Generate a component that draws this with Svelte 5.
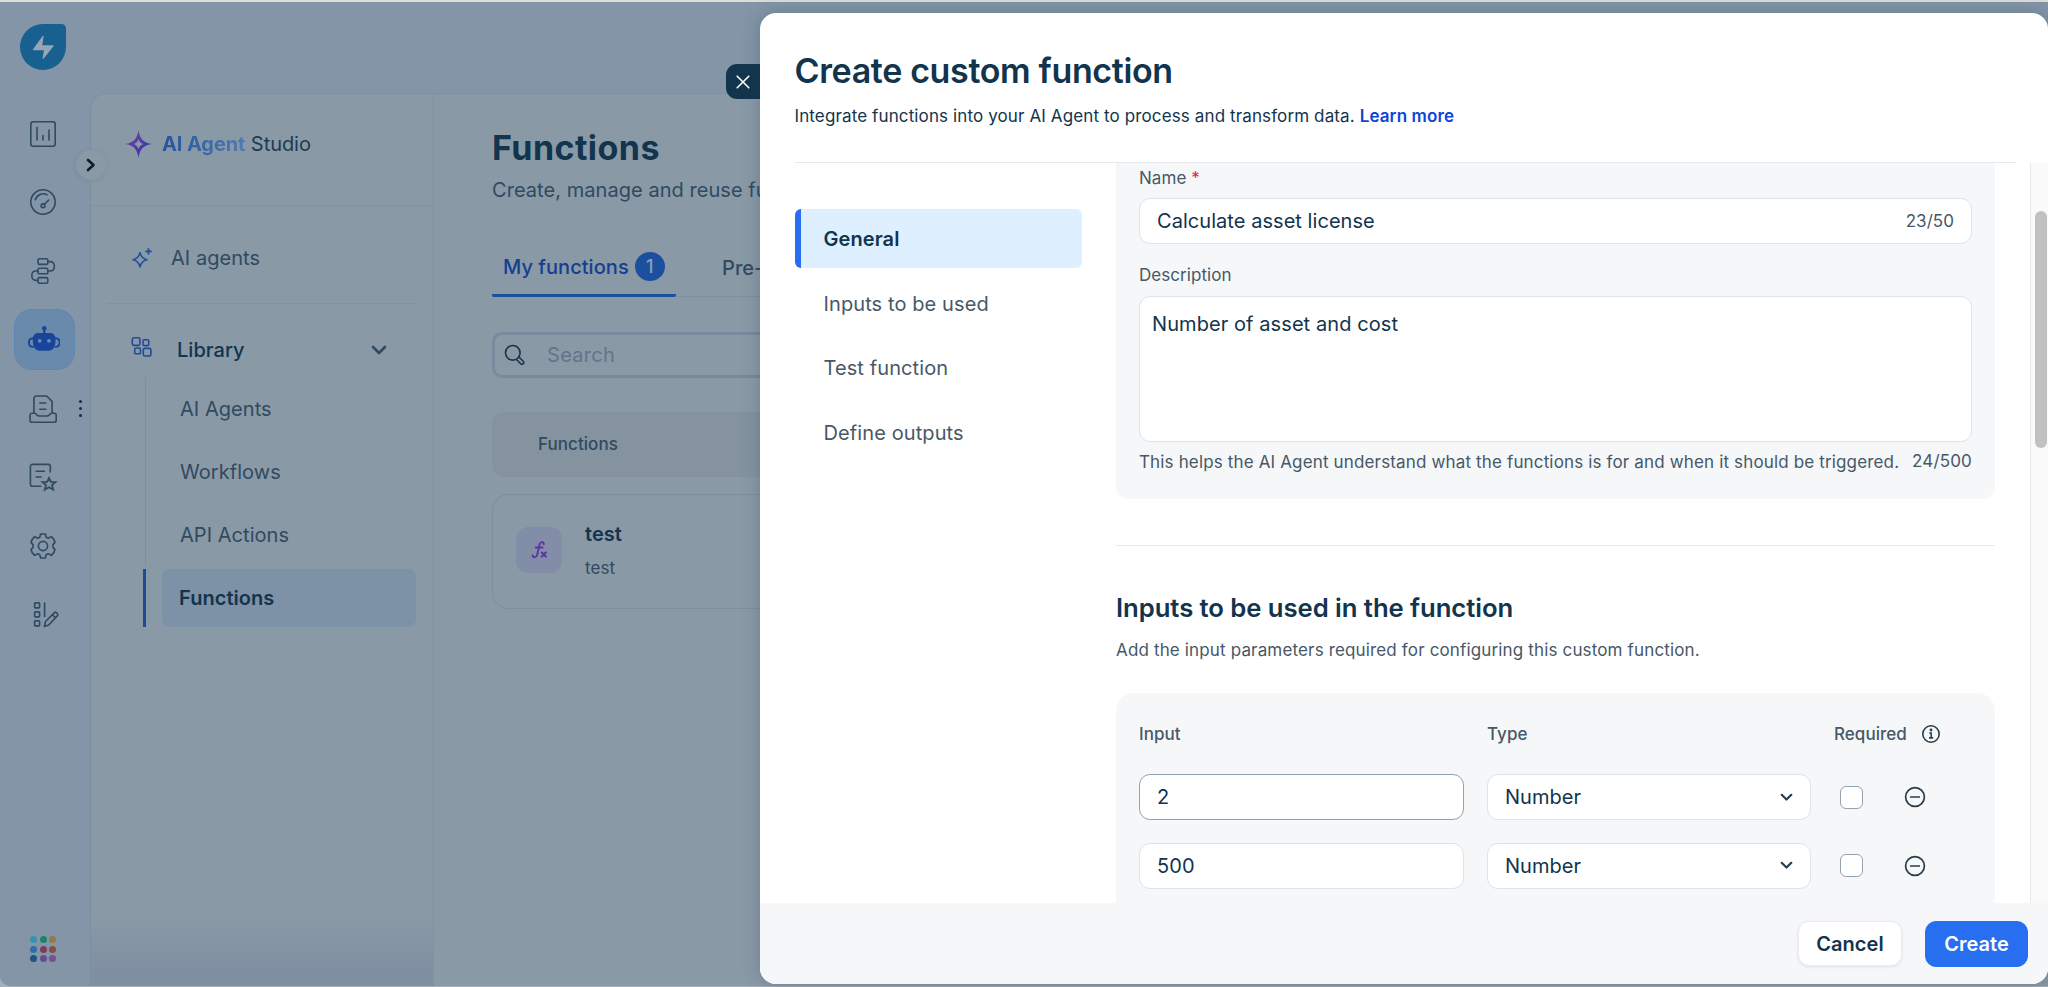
<script lang="ts">
  type InputRow = { id: number; value: string; type: string; required: boolean };

  const libraryItems = ["AI Agents", "Workflows", "API Actions", "Functions"];
  const steps = ["General", "Inputs to be used", "Test function", "Define outputs"];
  const railIcons = ["chart", "gauge", "flow", "bot", "inbox", "review", "gear", "design"];
  const switcherColors = [
    "#3695ab", "#1f8168", "#8f7c46",
    "#2d6fa6", "#7d3d56", "#8a4d42",
    "#1f5384", "#644e90", "#775092",
  ];

  let activeStep = $state("General");
  let name = $state("Calculate asset license");
  let description = $state("Number of asset and cost");
  let rows = $state<InputRow[]>([
    { id: 1, value: "2", type: "Number", required: false },
    { id: 2, value: "500", type: "Number", required: false },
  ]);

  function removeRow(id: number) {
    rows = rows.filter((r) => r.id !== id);
  }
</script>

{#snippet railIcon(kind: string)}
  <svg width="34" height="34" viewBox="0 0 34 34" fill="none" stroke="currentColor" stroke-width="1.6" stroke-linecap="round" stroke-linejoin="round">
    {#if kind === "chart"}
      <rect x="4.8" y="4.8" width="24.4" height="24.4" rx="2.4" />
      <path d="M11 10.5v12.5M17 18.5v4.5M23 13v10" />
    {:else if kind === "gauge"}
      <circle cx="17" cy="17" r="12.2" />
      <path d="M9.3 14.8A8.2 8.2 0 0 1 21 9.8M22.8 15l-4.4 4.3" />
      <circle cx="17" cy="20.8" r="1.9" />
    {:else if kind === "flow"}
      <rect x="12" y="4.8" width="9.8" height="5.6" rx="1.4" />
      <rect x="12" y="14.2" width="9.8" height="5.6" rx="1.4" />
      <rect x="12" y="23.6" width="9.8" height="5.6" rx="1.4" />
      <path d="M21.8 7.6h2.7a3.8 3.8 0 0 1 3.8 3.8v1.8a3.8 3.8 0 0 1-3.8 3.8h-2.7M12 17H9.7a3.8 3.8 0 0 0-3.8 3.8v1.8a3.8 3.8 0 0 0 3.8 3.8H12" />
    {:else if kind === "bot"}
      <g stroke="none" fill="currentColor">
        <path fill-rule="evenodd" d="M12 9.9h12.500c2.600 0 4.700 2 4.900 5.200.3 3.500.1 7.500-1.700 10-1.400 1.900-3 2.700-5 2.700h-9.100c-2 0-3.600-.8-5-2.700-1.800-2.500-2-6.500-1.700-10 .2-3.200 2.500-5.200 5.100-5.200zM15.600 17.800a1.900 1.900 0 1 0-3.800 0 1.900 1.900 0 1 0 3.800 0zM24.900 17.800a1.900 1.900 0 1 0-3.800 0 1.900 1.900 0 1 0 3.800 0z" />
        <circle cx="18.3" cy="5.3" r="2.3" />
        <path d="M17.200 6h2.200v4.500h-2.200z" />
      </g>
      <path d="M7 15.200c-2.900-.2-4.100 2-4.100 4.300s1.300 4.400 4.200 4.400M29.500 15.200c2.900-.2 4.100 2 4.100 4.300s-1.300 4.400-4.200 4.400" stroke-width="1.9" />
    {:else if kind === "inbox"}
      <path d="M7.900 20.500V6.800a2.800 2.800 0 0 1 2.800-2.800h9.800l5.600 5.400v11.100M13.800 11h6M13.800 17.200h6" />
      <path d="M6 21.200h2.500c1 0 1.500.7 2.200 1.500.8.900 1.600 1.300 2.700 1.300h7.400c1.100 0 1.900-.4 2.700-1.300.7-.8 1.200-1.500 2.200-1.500h2.500a2 2 0 0 1 2 2v5a2 2 0 0 1-2 2H6a2 2 0 0 1-2-2v-5a2 2 0 0 1 2-2z" />
    {:else if kind === "review"}
      <path d="M24.300 12V6.400a2 2 0 0 0-2-2H6.400a2 2 0 0 0-2 2v17.800a2 2 0 0 0 2 2h8.400M10.200 11.200h8.200M10.200 17h5" />
      <path d="M23 18l1.900 3.800 4.600.3-3.500 3 1.200 4.600-4.200-2.500-4.200 2.500 1.200-4.600-3.500-3 4.600-.3z" stroke-linejoin="miter" stroke-width="1.8" />
    {:else if kind === "gear"}
      <path d="M14.600 5h4.800l.8 3.300 2 .9 3.100-1.600 2.500 2.800 1.200 3-2 2.200v2.800l2 2.200-1.200 3-2.500 2.800-3.100-1.600-2 .9-.8 3.300h-4.800l-.8-3.300-2-.9-3.100 1.600-2.500-2.800-1.200-3 2-2.200v-2.800l-2-2.200 1.200-3 2.500-2.800 3.100 1.600 2-.9z" />
      <circle cx="17" cy="17" r="4.6" />
    {:else}
      <rect x="8.6" y="4.9" width="5" height="5" rx=".8" />
      <rect x="8.6" y="13.9" width="5" height="5" rx=".8" />
      <rect x="8.6" y="22.9" width="5" height="5" rx=".8" />
      <path d="M18.600 5v13.500M18.300 28.500l1.200-5L28.500 14.600a1.300 1.300 0 0 1 1.800 0l1.200 1.200a1.300 1.300 0 0 1 0 1.800L22.700 27zM26.500 16.800l3 3" />
    {/if}
  </svg>
{/snippet}

<div class="page">
  <div class="app">
    <nav class="rail">
      <svg class="logo" width="46" height="46" viewBox="0 0 46 46">
        <path d="M23 0h18.500A4.500 4.500 0 0 1 46 4.500V23A23 23 0 1 1 23 0z" fill="#17608f" />
        <path d="M22.800 11.800 13 25.300q-.5.900.6.900h10.300l-1.300 8.200q.4 1 1.100.2l9.800-12.400q.5-1-.6-1H22.300l1.300-8.900q-.2-1-.8-.5z" fill="#98a6b3" />
      </svg>
      <div class="rail-items">
        {#each railIcons as kind (kind)}
          <button class="rail-btn" class:active={kind === "bot"} aria-label={kind}>
            {@render railIcon(kind)}
            {#if kind === "inbox"}
              <span class="more"><i></i><i></i><i></i></span>
            {/if}
          </button>
        {/each}
      </div>
      <div class="switcher">
        {#each switcherColors as color}
          <i style="background: {color}"></i>
        {/each}
      </div>
    </nav>

    <div class="workspace">
      <aside class="sidebar">
        <button class="collapse" aria-label="Expand">
          <svg width="10" height="14" viewBox="0 0 10 14" fill="none" stroke="#0a1d2b" stroke-width="2.6" stroke-linecap="round" stroke-linejoin="round"><path d="M2 2l5.500 5L2 12" /></svg>
        </button>
        <div class="brand">
          <svg width="27" height="28" viewBox="0 0 27 28">
            <defs>
              <linearGradient id="spark" x1="0" y1="0" x2="1" y2="1">
                <stop offset="0.2" stop-color="#6b3f9e" />
                <stop offset="0.8" stop-color="#3a36a8" />
              </linearGradient>
            </defs>
            <path fill="url(#spark)" fill-rule="evenodd" d="M13.500 0c1.200 8.500 4.500 12.800 13.500 14-9 1.200-12.300 5.500-13.500 14C12.300 19.500 9 15.200 0 14 9 12.800 12.300 8.500 13.500 0zm0 9c-1 2.800-2.300 4-5 5 2.700 1 4 2.200 5 5 1-2.800 2.300-4 5-5-2.700-1-4-2.200-5-5z" />
          </svg>
          <span class="brand-text"><b>AI Agent</b> Studio</span>
        </div>
        <div class="side-link agents">
          <svg width="22" height="22" viewBox="0 0 22 22" fill="none" stroke="#224f9d" stroke-width="1.6" stroke-linejoin="round">
            <path d="M9 5.500c.9 4.300 2.700 6.200 7 7.200-4.300 1-6.100 2.900-7 7.200-.9-4.300-2.700-6.200-7-7.200 4.300-1 6.100-2.900 7-7.200z" />
            <path d="M17.500 1.200v6.400M14.300 4.400h6.400" stroke-width="1.8" />
          </svg>
          <span>AI agents</span>
        </div>
        <div class="side-link library">
          <svg width="22" height="22" viewBox="0 0 22 22" fill="none" stroke="#224b95" stroke-width="1.6">
            <rect x="1.3" y="1.8" width="7.6" height="7.6" rx="1.6" />
            <rect x="12" y="3.8" width="5.8" height="5.8" rx="1.4" />
            <rect x="3.7" y="12" width="5.8" height="5.8" rx="1.4" />
            <rect x="12.3" y="12.4" width="7.6" height="7.6" rx="1.6" />
          </svg>
          <span>Library</span>
          <svg class="chev" width="16" height="12" viewBox="0 0 16 12" fill="none" stroke="#304b61" stroke-width="2.7" stroke-linecap="round" stroke-linejoin="round"><path d="M2 3l6 6 6-6" /></svg>
        </div>
        <ul class="tree">
          {#each libraryItems as item (item)}
            <li class:current={item === "Functions"}><span>{item}</span></li>
          {/each}
        </ul>
      </aside>

      <main class="main">
        <h1>Functions</h1>
        <p class="lead">Create, manage and reuse functions across your agents.</p>
        <div class="tabs">
          <div class="tab selected">My functions <span class="badge">1</span></div>
          <div class="tab">Pre-built functions</div>
        </div>
        <div class="search">
          <svg width="22" height="22" viewBox="0 0 22 22" fill="none" stroke="#1c3447" stroke-width="1.6" stroke-linecap="round" stroke-linejoin="round">
            <circle cx="8.8" cy="8.8" r="7.3" />
            <path d="M12.700 15.800l4 4a1.700 1.700 0 0 0 2.500 0 1.700 1.700 0 0 0 0-2.500l-4-4" />
          </svg>
          <span>Search</span>
        </div>
        <div class="table-head">Functions</div>
        <div class="fn-card">
          <div class="fn-icon">
            <svg width="16" height="20" viewBox="0 0 16 20" fill="none" stroke="#5b33a3" stroke-width="2" stroke-linecap="round">
              <path d="M12.800 4.200c0-2.600-3.300-3-4.200 0L6.200 14.800c-.7 3-4.300 3.200-4.700.7M4.800 7.500h6.800" stroke-width="1.8" />
              <path d="M10.800 12.500l4 4M14.800 12.500l-4 4" />
            </svg>
          </div>
          <div class="fn-text">
            <strong>test</strong>
            <span>test</span>
          </div>
        </div>
      </main>
    </div>
  </div>

  <section class="drawer" role="dialog" aria-label="Create custom function">
    <button class="close" aria-label="Close">
      <svg width="14" height="14" viewBox="0 0 14 14" stroke="#fff" stroke-width="1.6" stroke-linecap="round"><path d="M1.200 1.200l11.600 11.600M12.800 1.200L1.200 12.800" /></svg>
    </button>

    <header>
      <h2>Create custom function</h2>
      <p>Integrate functions into your AI Agent to process and transform data. <a href="#learn">Learn more</a></p>
    </header>

    <div class="drawer-body">
      <nav class="steps">
        {#each steps as step (step)}
          <button class="step" class:active={step === activeStep} onclick={() => (activeStep = step)}>{step}</button>
        {/each}
      </nav>

      <div class="form">
        <div class="card general">
          <label for="fn-name">Name <em>*</em></label>
          <div class="field">
            <input id="fn-name" bind:value={name} />
            <span class="count">{name.length}/50</span>
          </div>
          <label class="desc-label" for="fn-desc">Description</label>
          <textarea id="fn-desc" bind:value={description}></textarea>
          <div class="help">
            <span>This helps the AI Agent understand what the functions is for and when it should be triggered.</span>
            <span class="count">{description.length}/500</span>
          </div>
        </div>

        <hr />

        <h3>Inputs to be used in the function</h3>
        <p class="hint">Add the input parameters required for configuring this custom function.</p>

        <div class="card inputs">
          <div class="grid head">
            <span>Input</span>
            <span>Type</span>
            <span class="required">Required
              <svg width="20" height="20" viewBox="0 0 20 20" fill="none" stroke="#283c4b" stroke-width="1.6"><circle cx="10" cy="10" r="8.2" /><path d="M8.300 9h1.900v4.700M8 13.900h4.200" /><circle cx="10" cy="6" r=".6" fill="#283c4b" /></svg>
            </span>
          </div>
          {#each rows as row (row.id)}
            <div class="grid">
              <div class="field" class:hovered={row.id === 1}><input bind:value={row.value} aria-label="Input" /></div>
              <div class="field select">
                <span>{row.type}</span>
                <svg width="13" height="9" viewBox="0 0 13 9" fill="none" stroke="#283c4b" stroke-width="2.2" stroke-linecap="round" stroke-linejoin="round"><path d="M1.700 1.800l4.800 4.700 4.800-4.700" /></svg>
              </div>
              <input class="check" type="checkbox" bind:checked={row.required} aria-label="Required" />
              <button class="remove" aria-label="Remove" onclick={() => removeRow(row.id)}>
                <svg width="22" height="22" viewBox="0 0 22 22" fill="none" stroke="#283c4b" stroke-width="1.7" stroke-linecap="round"><circle cx="11" cy="11" r="9.4" /><path d="M6.700 11h8.600" /></svg>
              </button>
            </div>
          {/each}
        </div>
      </div>

      <div class="scrollbar"><i></i></div>
    </div>

    <footer>
      <button class="btn">Cancel</button>
      <button class="btn primary">Create</button>
    </footer>
  </section>
</div>

<style>
  :global(body) {
    margin: 0;
    background: #dcdcd9;
  }

  .page {
    position: relative;
    box-sizing: border-box;
    height: 987px;
    padding: 2px 0 1px;
    overflow: hidden;
    font-family: Inter, "Liberation Sans", sans-serif;
    font-size: 20px;
    letter-spacing: 0.05px;
    color: #12344d;
    background: linear-gradient(#dcdcd9 50%, #a3b0bc 50%);
  }

  .page :global(*) {
    box-sizing: border-box;
  }

  button,
  input,
  textarea {
    margin: 0;
    padding: 0;
    border: none;
    background: none;
    font: inherit;
    letter-spacing: inherit;
    color: inherit;
    outline: none;
  }

  svg {
    display: block;
    flex: none;
  }

  .app {
    display: flex;
    height: 984px;
    background: #8395a7;
    border-radius: 0 0 0 10px;
    overflow: hidden;
  }

  .rail {
    display: flex;
    flex-direction: column;
    width: 90px;
    flex: none;
    padding-top: 22px;
  }

  .logo {
    margin-left: 20px;
  }

  .rail-items {
    display: flex;
    flex-direction: column;
    gap: 7.8px;
    margin-top: 33px;
    padding-left: 14px;
  }

  .rail-btn {
    position: relative;
    display: flex;
    align-items: center;
    justify-content: center;
    width: 61px;
    height: 61px;
    padding-right: 3px;
    color: #304a60;
  }

  .rail-btn.active {
    background: #6a8aab;
    border: 1.5px solid #5b87b4;
    border-radius: 18px;
    color: #18459b;
  }

  .more {
    position: absolute;
    left: 65px;
    display: flex;
    flex-direction: column;
    gap: 4px;
  }

  .more i {
    width: 3px;
    height: 3px;
    border-radius: 50%;
    background: #15303f;
  }

  .switcher {
    display: grid;
    grid-template-columns: repeat(3, 7px);
    gap: 2.5px;
    margin: auto 0 24px 30px;
  }

  .switcher i {
    width: 7px;
    height: 7px;
    border-radius: 50%;
  }

  .workspace {
    display: flex;
    flex: 1;
    margin-top: 91px;
    background: #8a99a6;
    border: 1px solid #7d8fa1;
    border-right: none;
    border-bottom: none;
    border-radius: 16px 0 0 0;
  }

  .sidebar {
    position: relative;
    width: 343px;
    flex: none;
    border-right: 1.5px solid #8292a1;
    border-radius: 16px 0 0 0;
    background: linear-gradient(#8a99a6 820px, #8090a2 875px);
  }

  .collapse {
    position: absolute;
    left: -15px;
    top: 56px;
    display: flex;
    align-items: center;
    justify-content: center;
    width: 30px;
    height: 30px;
    border-radius: 50%;
    background: #8a99a6;
    box-shadow: 0 1px 5px rgb(60 85 110 / 0.15);
  }

  .brand {
    display: flex;
    align-items: center;
    gap: 10px;
    height: 112px;
    padding: 0 0 12px 34px;
    border-bottom: 1.5px solid #7f909f;
  }

  .brand-text {
    color: #1b3c55;
    letter-spacing: -0.05px;
  }

  .brand-text b {
    font-weight: 700;
    letter-spacing: -0.1px;
    background: linear-gradient(90deg, #23539c, #4f7bb1);
    background-clip: text;
    -webkit-text-fill-color: transparent;
  }

  .side-link {
    display: flex;
    align-items: center;
    margin: 0 17px 0 16px;
    color: #304a60;
  }

  .agents {
    height: 98px;
    padding: 7px 0 0 24px;
    gap: 18px;
    border-bottom: 1.5px solid #8191a0;
  }

  .library {
    height: 73px;
    padding: 18px 29px 0 24px;
    gap: 24px;
    color: #12344d;
    font-weight: 500;
  }

  .library > svg:first-child {
    margin-top: -5px;
  }

  .library .chev {
    margin-left: auto;
  }

  .tree {
    margin: 0 17px 0 54px;
    padding: 0;
    list-style: none;
    color: #304a60;
  }

  .tree li {
    display: flex;
    height: 63px;
    align-items: center;
    padding-left: 34px;
    border-left: 1px solid #7d8e9e;
  }

  .tree li.current {
    height: 58px;
    margin: 3px 0 0 -2px;
    padding-left: 16px;
    border-left: 3px solid #204a99;
    color: #12344d;
    font-weight: 600;
  }

  .tree li.current span {
    flex: 1;
    padding-left: 17px;
    border-radius: 8px;
    background: #7d91a7;
    line-height: 58px;
  }

  .main {
    flex: 1;
    padding: 31px 0 0 58px;
  }

  h1,
  h2,
  h3,
  p {
    margin: 0;
  }

  h1 {
    font-size: 34px;
    font-weight: 700;
    line-height: 46px;
    letter-spacing: 0.45px;
  }

  .lead {
    margin-top: 6px;
    line-height: 26px;
    color: #304a60;
    letter-spacing: 0.05px;
  }

  .tabs {
    display: flex;
    gap: 46px;
    height: 65px;
    margin-top: 29px;
    border-bottom: 1px solid #7f909f;
  }

  .tab {
    display: flex;
    align-items: center;
    gap: 6px;
    height: 65px;
    padding-top: 7px;
    color: #304a60;
    font-weight: 500;
    white-space: nowrap;
  }

  .tab.selected {
    width: 184px;
    padding-left: 11px;
    border-bottom: 3px solid #1d4f9f;
    border-radius: 2px;
    color: #143e93;
  }

  .badge {
    display: flex;
    align-items: center;
    justify-content: center;
    width: 30px;
    height: 29px;
    border-radius: 50%;
    background: #1d4f9f;
    color: #8a9fb9;
    font-size: 18px;
  }

  .search {
    display: flex;
    align-items: center;
    gap: 21px;
    width: 600px;
    height: 46px;
    margin-top: 35px;
    padding-left: 9px;
    border: 3px solid #788a9c;
    border-radius: 10px;
    color: #61758a;
    letter-spacing: 0.3px;
  }

  .table-head {
    height: 65px;
    margin-top: 34px;
    padding-left: 46px;
    border-radius: 12px;
    background: #84939f;
    color: #304a60;
    font-size: 17px;
    font-weight: 500;
    line-height: 65px;
  }

  .fn-card {
    display: flex;
    align-items: center;
    gap: 23px;
    height: 115px;
    margin-top: 17px;
    padding: 0 0 4px 23px;
    border: 1.5px solid #7f8e9c;
    border-radius: 16px;
  }

  .fn-icon {
    display: flex;
    align-items: center;
    justify-content: center;
    width: 46px;
    height: 46px;
    border-radius: 12px;
    background: #828ea8;
  }

  .fn-text {
    display: flex;
    flex-direction: column;
    gap: 6px;
    padding-top: 2px;
    line-height: 28px;
  }

  .fn-text strong {
    font-weight: 600;
  }

  .fn-text span {
    color: #304a60;
    font-size: 17px;
  }

  .drawer {
    position: absolute;
    top: 13px;
    left: 760px;
    right: 0;
    display: flex;
    flex-direction: column;
    height: 971px;
    border-radius: 16px;
    background: #fff;
    box-shadow: 0 0 18px rgb(40 65 90 / 0.3);
  }

  .close {
    position: absolute;
    left: -34px;
    top: 51px;
    display: flex;
    align-items: center;
    justify-content: center;
    width: 34px;
    height: 35px;
    border-radius: 11px 0 0 11px;
    background: #12344d;
  }

  header {
    height: 150px;
    flex: none;
    margin: 0 32px 0 34.5px;
    padding-top: 35px;
    border-bottom: 1.5px solid #e6eaf0;
  }

  h2 {
    font-size: 34px;
    font-weight: 600;
    line-height: 46px;
    letter-spacing: -0.35px;
  }

  header p {
    margin-top: 10px;
    font-size: 17px;
    line-height: 24px;
    letter-spacing: 0.12px;
  }

  header a {
    color: #0d45d8;
    font-weight: 600;
    text-decoration: none;
  }

  .drawer-body {
    display: flex;
    height: 740px;
    flex: none;
  }

  .steps {
    display: flex;
    flex-direction: column;
    gap: 5.6px;
    width: 287px;
    margin: 46px 34.5px 0 34.5px;
  }

  .step {
    height: 59px;
    padding: 1px 0 0 23px;
    border-left: 6px solid transparent;
    border-radius: 6px;
    color: #475867;
    text-align: left;
    letter-spacing: 0.1px;
  }

  .step.active {
    border-left-color: #276ef1;
    background: #deefff;
    color: #12344d;
    font-weight: 600;
  }

  .form {
    width: 879px;
    height: 740px;
    overflow: hidden;
  }

  .card {
    padding: 0 23px;
    background: #f5f7f9;
  }

  .general {
    height: 336px;
    padding-top: 3px;
    border-radius: 0 0 12px 12px;
    color: #475867;
    font-size: 17px;
  }

  label {
    display: block;
    line-height: 24px;
  }

  label em {
    color: #d72d30;
    font-style: normal;
  }

  .field {
    display: flex;
    align-items: center;
    height: 46px;
    padding: 0 17px;
    border: 1.5px solid #dde3eb;
    border-radius: 11px;
    background: #fff;
    color: #12344d;
    font-size: 20px;
  }

  .field.hovered {
    border-color: #92a2b1;
  }

  .field input {
    flex: 1;
    width: 100%;
    min-width: 0;
  }

  .general .field {
    margin-top: 8px;
  }

  .count {
    color: #475867;
    font-size: 17px;
  }

  .desc-label {
    margin-top: 19px;
  }

  textarea {
    display: block;
    width: 100%;
    height: 146px;
    margin-top: 9px;
    padding: 13px 12px;
    border: 1.5px solid #dde3eb;
    border-radius: 11px;
    background: #fff;
    color: #12344d;
    font-size: 20px;
    line-height: 29px;
    letter-spacing: 0.08px;
    resize: none;
  }

  .help {
    display: flex;
    justify-content: space-between;
    padding-top: 8px;
    line-height: 24px;
    white-space: nowrap;
    letter-spacing: 0.15px;
  }

  .help .count {
    margin-top: -1px;
  }

  hr {
    height: 1px;
    margin: 46px 0 0;
    border: none;
    background: #e6eaf0;
  }

  h3 {
    margin-top: 44px;
    font-size: 25.7px;
    font-weight: 600;
    line-height: 36px;
    letter-spacing: -0.06px;
  }

  .hint {
    margin-top: 11px;
    color: #475867;
    font-size: 17px;
    line-height: 26px;
    letter-spacing: 0.15px;
  }

  .inputs {
    height: 300px;
    margin-top: 30px;
    border-radius: 18px;
  }

  .grid {
    display: grid;
    grid-template-columns: 325px 324px 23px auto;
    align-items: center;
    justify-content: start;
    column-gap: 23px;
    margin-bottom: 22.7px;
  }

  .grid .check {
    margin-left: 6px;
  }

  .head {
    grid-template-columns: 325px 324px auto;
    height: 81px;
    margin: 0;
    color: #475867;
    font-size: 17px;
    font-weight: 500;
  }

  .required {
    display: flex;
    align-items: center;
    gap: 14px;
  }

  .select {
    justify-content: space-between;
  }

  .check {
    appearance: none;
    width: 23px;
    height: 23px;
    border: 1.5px solid #92a2b1;
    border-radius: 6px;
    background: #fff;
  }

  .remove {
    margin-left: 24px;
  }

  .scrollbar {
    width: 18px;
    margin-left: auto;
    padding: 48px 1px 0 4px;
    border-left: 1.5px solid #e8e8e8;
    background: #fafafa;
  }

  .scrollbar i {
    display: block;
    height: 237px;
    border-radius: 6px;
    background: #c1c1c1;
  }

  footer {
    display: flex;
    align-items: flex-start;
    justify-content: flex-end;
    gap: 23px;
    flex: 1;
    padding: 18px 20px 0 0;
    border-radius: 0 0 16px 16px;
    background: #f5f7f9;
  }

  .btn {
    width: 104px;
    height: 45px;
    border: 1px solid #e9edf2;
    border-radius: 11px;
    background: #fff;
    box-shadow: 0 1px 3px rgb(18 52 77 / 0.1);
    font-weight: 600;
  }

  .btn.primary {
    width: 103px;
    height: 46px;
    border-color: #276ef1;
    background: #276ef1;
    color: #fff;
    box-shadow: none;
  }
</style>
